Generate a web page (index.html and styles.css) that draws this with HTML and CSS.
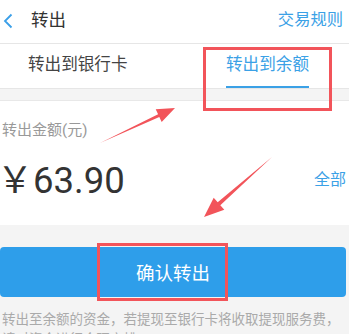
FILE: index.html
```html
<!DOCTYPE html>
<html>
<head>
<meta charset="utf-8">
<link rel="stylesheet" href="styles.css">
</head>
<body>
<div class="page">
  <header class="topbar">
    <svg class="back" width="12" height="16" viewBox="0 0 12 16"><path d="M9.5 1.5 L3 8 L9.5 14.5" fill="none" stroke="#3a9fe8" stroke-width="1.8"/></svg>
    <span class="title">转出</span>
    <span class="rules">交易规则</span>
  </header>
  <nav class="tabs">
    <span class="tab">转出到银行卡</span>
    <span class="tab active">转出到余额</span>
  </nav>
  <section class="amount-card">
    <div class="label">转出金额(元)</div>
    <div class="amount-row">
      <span class="amount"><span class="yen">￥</span>63.90</span>
      <span class="all">全部</span>
    </div>
  </section>
  <section class="bottom">
    <button class="confirm">确认转出</button>
    <p class="note">转出至余额的资金，若提现至银行卡将收取提现服务费，请对资金进行合理安排。</p>
  </section>
  <div class="mark mark-tab"></div>
  <div class="mark mark-btn"></div>
  <svg class="arrows" width="349" height="334" viewBox="0 0 349 334">
    <polygon points="100,143 158.1,114.2 155.7,109.3 175,108 161.7,121.9 159.3,117" fill="#f2545a"/>
    <polygon points="272,157 217.7,202.3 213.7,197.8 204,217 224.3,209.8 220.3,205.3" fill="#f2545a"/>
  </svg>
</div>
</body>
</html>
```
FILE: styles.css
```css
* { box-sizing: border-box; }
html, body { margin: 0; padding: 0; }
body {
  width: 349px;
  height: 334px;
  overflow: hidden;
  background: #f4f4f4;
  font-family: Roboto, "Noto Sans CJK SC", sans-serif;
}
.page { position: relative; width: 349px; height: 334px; overflow: hidden; }
.topbar {
  height: 44px;
  background: #fff;
  border-bottom: 1px solid #e6e6e6;
  display: flex;
  align-items: center;
  padding: 0 6px 0 2px;
}
.back { display: block; margin-top: -1px; }
.title { margin-left: 17px; font-size: 17.5px; color: #333; line-height: 24px; margin-top: -3px; }
.rules { margin-left: auto; font-size: 16.3px; color: #3ba1e6; line-height: 24px; margin-top: -3px; }
.tabs {
  height: 45px;
  background: #fff;
  display: flex;
  padding: 0 40px 0 28px;
  border-bottom: 1px solid #e6e6e6;
}
.tab {
  font-size: 16.6px;
  line-height: 24px;
  padding-top: 9px;
  height: 44px;
  color: #444;
  border-bottom: 2px solid transparent;
}
.tab.active { margin-left: auto; color: #3ba1e6; border-bottom-color: #3ba1e6; }
.amount-card {
  margin-top: 11px;
  background: #fff;
  border-top: 1px solid #e8e8e8;
  height: 125px;
  padding: 19px 3px 0 2px;
}
.label { font-size: 15px; line-height: 20px; color: #999; }
.amount-row { display: flex; align-items: center; margin-top: 17px; height: 44px; }
.amount { font-size: 36.5px; color: #333; line-height: 44px; margin-left: -5px; }
.yen { font-family: "Noto Sans CJK SC", sans-serif; font-size: 36px; }
.all { margin-left: auto; font-size: 16px; color: #3ba1e6; line-height: 22px; margin-top: 2px; }
.bottom { padding: 22px 3px 0 0; }
.confirm {
  display: block;
  width: 346px;
  height: 50px;
  border: 0;
  border-radius: 4px;
  background: #2e9eea;
  color: #fff;
  font-family: "Noto Sans CJK SC", sans-serif;
  font-size: 18.5px;
  padding: 0;
}
.note {
  margin: 11px 0 0 2px;
  font-family: "Noto Sans CJK SC", sans-serif;
  font-size: 13.5px;
  line-height: 20px;
  color: #aaa;
  width: 347px;
}
.mark { position: absolute; border: 3px solid #f2545a; }
.mark-tab { left: 203px; top: 47px; width: 129px; height: 64px; }
.mark-btn { left: 97px; top: 243px; width: 131px; height: 58px; }
.arrows { position: absolute; left: 0; top: 0; }
```
